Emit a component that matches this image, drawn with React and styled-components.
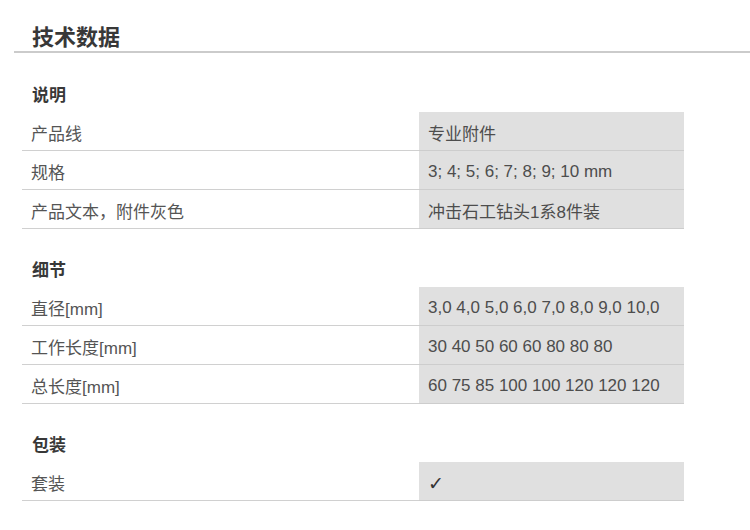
import React from "react";
import styled, { createGlobalStyle } from "styled-components";

const Global = createGlobalStyle`
  html, body { margin: 0; padding: 0; background: #fff; }
  body {
    font-family: "Liberation Sans", Arial, "Noto Sans CJK SC", sans-serif;
    color: #4a4a4a;
  }
`;

const Page = styled.div`
  padding: 25px 0 0 14px;
  width: 736px;
`;

const Title = styled.h2`
  margin: 0;
  padding-left: 18px;
  font-size: 22px;
  line-height: 26px;
  font-weight: 700;
  color: #383838;
  border-bottom: 2px solid #cbcbcb;
`;

const Section = styled.section`
  margin: ${(p) => (p.$first ? "31px" : "30px")} 0 0 8px;
  width: 662px;
`;

const SectionTitle = styled.h3`
  margin: 0 0 4px;
  padding-left: 10px;
  font-size: 17px;
  line-height: 24px;
  font-weight: 700;
  color: #383838;
`;

const Table = styled.div`
  display: grid;
  grid-template-columns: 397px 265px;
`;

const Cell = styled.div`
  height: 38px;
  box-sizing: border-box;
  padding: 3px 0 0 9px;
  display: flex;
  align-items: center;
  font-size: 17px;
  color: ${(p) => (p.$value ? "#4d4d4d" : "#555")};
  background: ${(p) => (p.$value ? "#e0e0e0" : "transparent")};
  border-bottom: 1px solid ${(p) => (p.$value ? "#cdcdcd" : "#d0d0d0")};
  white-space: nowrap;
  height: 39px;
`;

const Check = styled.span`
  font-family: "DejaVu Sans", sans-serif;
  font-size: 19px;
  color: #333;
`;

const sections = [
  {
    title: "说明",
    rows: [
      ["产品线", "专业附件"],
      ["规格", "3; 4; 5; 6; 7; 8; 9; 10 mm"],
      ["产品文本，附件灰色", "冲击石工钻头1系8件装"],
    ],
  },
  {
    title: "细节",
    rows: [
      ["直径[mm]", "3,0 4,0 5,0 6,0 7,0 8,0 9,0 10,0"],
      ["工作长度[mm]", "30 40 50 60 60 80 80 80"],
      ["总长度[mm]", "60 75 85 100 100 120 120 120"],
    ],
  },
  {
    title: "包装",
    rows: [["套装", "check"]],
  },
];

export default function App() {
  return (
    <>
      <Global />
      <Page>
        <Title>技术数据</Title>
        {sections.map((s, i) => (
          <Section key={s.title} $first={i === 0}>
            <SectionTitle>{s.title}</SectionTitle>
            <Table>
              {s.rows.map(([k, v]) => (
                <React.Fragment key={k}>
                  <Cell>{k}</Cell>
                  <Cell $value>{v === "check" ? <Check>✓</Check> : v}</Cell>
                </React.Fragment>
              ))}
            </Table>
          </Section>
        ))}
      </Page>
    </>
  );
}
